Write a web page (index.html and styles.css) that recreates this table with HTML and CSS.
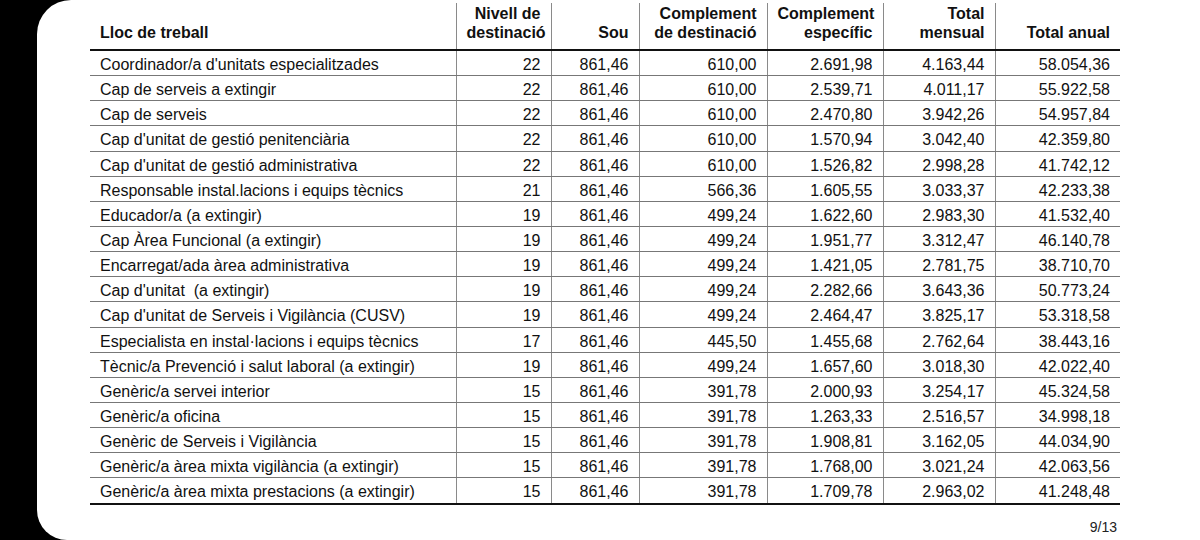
FILE: index.html
```html
<!DOCTYPE html>
<html lang="ca">
<head>
<meta charset="utf-8">
<title>Retribucions</title>
<link rel="stylesheet" href="styles.css">
</head>
<body>
<div class="page">
  <table class="pay">
    <colgroup>
      <col class="c1"><col class="c2"><col class="c3"><col class="c4"><col class="c5"><col class="c6"><col class="c7">
    </colgroup>
    <thead>
      <tr>
        <th class="lt">Lloc de treball</th>
        <th>Nivell de<br>destinació</th>
        <th>Sou</th>
        <th>Complement<br>de destinació</th>
        <th>Complement<br>específic</th>
        <th>Total<br>mensual</th>
        <th>Total anual</th>
      </tr>
    </thead>
    <tbody>
      <tr><td>Coordinador/a d'unitats especialitzades</td><td>22</td><td>861,46</td><td>610,00</td><td>2.691,98</td><td>4.163,44</td><td>58.054,36</td></tr>
      <tr><td>Cap de serveis a extingir</td><td>22</td><td>861,46</td><td>610,00</td><td>2.539,71</td><td>4.011,17</td><td>55.922,58</td></tr>
      <tr><td>Cap de serveis</td><td>22</td><td>861,46</td><td>610,00</td><td>2.470,80</td><td>3.942,26</td><td>54.957,84</td></tr>
      <tr><td>Cap d'unitat de gestió penitenciària</td><td>22</td><td>861,46</td><td>610,00</td><td>1.570,94</td><td>3.042,40</td><td>42.359,80</td></tr>
      <tr><td>Cap d'unitat de gestió administrativa</td><td>22</td><td>861,46</td><td>610,00</td><td>1.526,82</td><td>2.998,28</td><td>41.742,12</td></tr>
      <tr><td>Responsable instal.lacions i equips tècnics</td><td>21</td><td>861,46</td><td>566,36</td><td>1.605,55</td><td>3.033,37</td><td>42.233,38</td></tr>
      <tr><td>Educador/a (a extingir)</td><td>19</td><td>861,46</td><td>499,24</td><td>1.622,60</td><td>2.983,30</td><td>41.532,40</td></tr>
      <tr><td>Cap Àrea Funcional (a extingir)</td><td>19</td><td>861,46</td><td>499,24</td><td>1.951,77</td><td>3.312,47</td><td>46.140,78</td></tr>
      <tr><td>Encarregat/ada àrea administrativa</td><td>19</td><td>861,46</td><td>499,24</td><td>1.421,05</td><td>2.781,75</td><td>38.710,70</td></tr>
      <tr><td>Cap d'unitat&nbsp; (a extingir)</td><td>19</td><td>861,46</td><td>499,24</td><td>2.282,66</td><td>3.643,36</td><td>50.773,24</td></tr>
      <tr><td>Cap d'unitat de Serveis i Vigilància (CUSV)</td><td>19</td><td>861,46</td><td>499,24</td><td>2.464,47</td><td>3.825,17</td><td>53.318,58</td></tr>
      <tr><td>Especialista en instal·lacions i equips tècnics</td><td>17</td><td>861,46</td><td>445,50</td><td>1.455,68</td><td>2.762,64</td><td>38.443,16</td></tr>
      <tr><td>Tècnic/a Prevenció i salut laboral (a extingir)</td><td>19</td><td>861,46</td><td>499,24</td><td>1.657,60</td><td>3.018,30</td><td>42.022,40</td></tr>
      <tr><td>Genèric/a servei interior</td><td>15</td><td>861,46</td><td>391,78</td><td>2.000,93</td><td>3.254,17</td><td>45.324,58</td></tr>
      <tr><td>Genèric/a oficina</td><td>15</td><td>861,46</td><td>391,78</td><td>1.263,33</td><td>2.516,57</td><td>34.998,18</td></tr>
      <tr><td>Genèric de Serveis i Vigilància</td><td>15</td><td>861,46</td><td>391,78</td><td>1.908,81</td><td>3.162,05</td><td>44.034,90</td></tr>
      <tr><td>Genèric/a àrea mixta vigilància (a extingir)</td><td>15</td><td>861,46</td><td>391,78</td><td>1.768,00</td><td>3.021,24</td><td>42.063,56</td></tr>
      <tr><td>Genèric/a àrea mixta prestacions (a extingir)</td><td>15</td><td>861,46</td><td>391,78</td><td>1.709,78</td><td>2.963,02</td><td>41.248,48</td></tr>
    </tbody>
  </table>
  <div class="pagenum">9/13</div>
</div>
</body>
</html>
```

FILE: styles.css
```css
html, body {
  margin: 0;
  padding: 0;
  background: #000;
}
body {
  width: 1200px;
  height: 540px;
  overflow: hidden;
  font-family: "Liberation Sans", Arial, sans-serif;
  color: #111;
}
.page {
  margin-left: 37px;
  height: 540px;
  background: #fff;
  border-radius: 34px 0 0 30px;
  padding-top: 3px;
  padding-left: 53px;
  box-sizing: border-box;
}
.pay {
  border-collapse: collapse;
  table-layout: fixed;
  width: 1030px;
  font-size: 16px;
}
.c1 { width: 366px; }
.c2 { width: 95px; }
.c3 { width: 88px; }
.c4 { width: 128px; }
.c5 { width: 116px; }
.c6 { width: 112px; }
.c7 { width: 125px; }
.pay th {
  font-weight: bold;
  text-align: right;
  vertical-align: bottom;
  line-height: 19px;
  padding: 0 10px 7px 10px;
  height: 39px;
  border-bottom: 2px solid #111;
  border-left: 1px solid #8a8a8a;
  white-space: nowrap;
}
.pay th.lt {
  text-align: left;
  border-left: none;
}
.pay td {
  height: 20.15px;
  padding: 4px 10px 0 10px;
  line-height: 18px;
  text-align: right;
  white-space: nowrap;
  border-bottom: 1px solid #777;
  border-left: 1px solid #8a8a8a;
}
.pay td:first-child {
  text-align: left;
  border-left: none;
}
.pay tbody tr:last-child td {
  border-bottom: 2px solid #111;
}
.pagenum {
  width: 1030px;
  text-align: right;
  font-size: 14px;
  padding-right: 3px;
  box-sizing: border-box;
  margin-top: 14px;
  color: #222;
}
```
